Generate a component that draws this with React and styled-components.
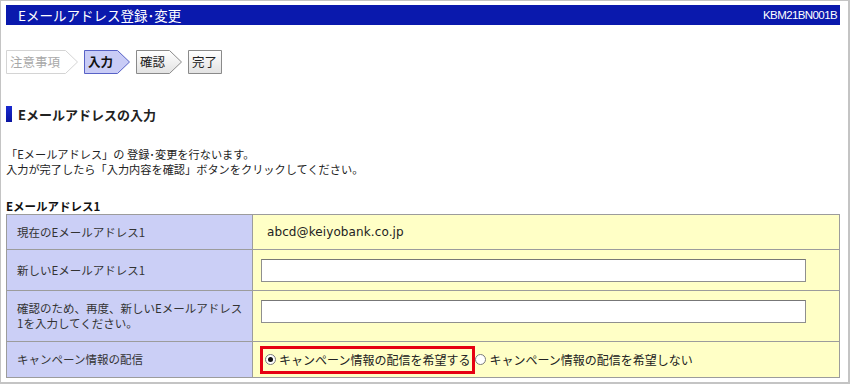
import React from 'react';
import styled, { createGlobalStyle } from 'styled-components';

const GlobalStyle = createGlobalStyle`
  html, body {
    margin: 0;
    padding: 0;
    background: #ffffff;
  }
  body {
    font-family: 'Noto Sans CJK JP', 'Noto Sans', sans-serif;
    color: #222;
  }
`;

const steps = [
  { label: '注意事項', width: 72, kind: 'done' },
  { label: '入力', width: 46, kind: 'current' },
  { label: '確認', width: 46, kind: 'next' },
  { label: '完了', width: 34, kind: 'last' },
];

const stepColors = {
  done: { stroke: '#d4d4d4', fill: '#ffffff', text: '#a8a8a8' },
  current: { stroke: '#5862c6', fill: '#c9ccf6', text: '#111' },
  next: { stroke: '#8a8a8a', fill: 'url(#stepGrad)', text: '#222' },
  last: { stroke: '#8a8a8a', fill: 'url(#stepGrad)', text: '#222' },
};

const StepShape = ({ width, kind }) => {
  const c = stepColors[kind];
  const h = 24;
  const points =
    kind === 'last'
      ? `0.5,0.5 ${width - 0.5},0.5 ${width - 0.5},${h - 0.5} 0.5,${h - 0.5}`
      : `0.5,0.5 ${width - 12.5},0.5 ${width - 0.5},${h / 2} ${width - 12.5},${h - 0.5} 0.5,${h - 0.5}`;
  return (
    <ShapeSvg width={width} height={h}>
      <defs>
        <linearGradient id="stepGrad" x1="0" y1="0" x2="0" y2="1">
          <stop offset="0" stopColor="#ffffff" />
          <stop offset="1" stopColor="#e2e2e2" />
        </linearGradient>
      </defs>
      <polygon points={points} fill={c.fill} stroke={c.stroke} strokeWidth="1" />
    </ShapeSvg>
  );
};

const App = () => {
  return (
    <>
      <GlobalStyle />
      <Frame>
        <TitleBar>
          <TitleText>Eメールアドレス登録･変更</TitleText>
          <ScreenId>KBM21BN001B</ScreenId>
        </TitleBar>

        <Stepper>
          {steps.map((s) => (
            <Step key={s.label} $w={s.width}>
              <StepShape width={s.width} kind={s.kind} />
              <StepLabel $color={stepColors[s.kind].text} $bold={s.kind === 'current'}>
                {s.label}
              </StepLabel>
            </Step>
          ))}
        </Stepper>

        <SectionHeading>Eメールアドレスの入力</SectionHeading>

        <Lead>
          「Eメールアドレス」の 登録･変更を行ないます。
          <br />
          入力が完了したら「入力内容を確認」ボタンをクリックしてください。
        </Lead>

        <TableCaption>Eメールアドレス1</TableCaption>
        <FormTable>
          <LabelCell $h={35}>現在のEメールアドレス1</LabelCell>
          <ValueCell $h={35}>
            <CurrentValue>abcd@keiyobank.co.jp</CurrentValue>
          </ValueCell>

          <LabelCell $h={41}>新しいEメールアドレス1</LabelCell>
          <ValueCell $h={41}>
            <TextInput type="text" />
          </ValueCell>

          <LabelCell $h={51}>
            確認のため、再度、新しいEメールアドレス
            <br />
            1を入力してください。
          </LabelCell>
          <ValueCell $h={51} $top>
            <TextInput type="text" />
          </ValueCell>

          <LabelCell $h={35} $last>キャンペーン情報の配信</LabelCell>
          <ValueCell $h={35} $last>
            <Highlight>
              <RadioOption>
                <Radio type="radio" name="campaign" defaultChecked />
                キャンペーン情報の配信を希望する
              </RadioOption>
            </Highlight>
            <RadioOption>
              <Radio type="radio" name="campaign" />
              キャンペーン情報の配信を希望しない
            </RadioOption>
          </ValueCell>
        </FormTable>
      </Frame>
    </>
  );
};

const Frame = styled.div`
  width: 850px;
  height: 384px;
  box-sizing: border-box;
  border: 1px solid #c4c4c4;
  border-right-width: 2px;
  border-bottom-width: 2px;
  padding: 4px 8px 0 5px;
  overflow: hidden;
`;

const TitleBar = styled.div`
  display: flex;
  align-items: center;
  justify-content: space-between;
  height: 20px;
  background: #0a19ad;
  color: #ffffff;
  padding: 0 3px 0 12px;
`;

const TitleText = styled.span`
  font-size: 13.5px;
  line-height: 20px;
`;

const ScreenId = styled.span`
  font-family: 'Liberation Sans', Arial, sans-serif;
  font-size: 11.5px;
  letter-spacing: -0.6px;
  line-height: 20px;
`;

const Stepper = styled.div`
  display: flex;
  gap: 6px;
  margin-top: 25px;
  height: 24px;
`;

const Step = styled.div`
  position: relative;
  width: ${(p) => p.$w}px;
  height: 24px;
  display: flex;
  align-items: center;
`;

const ShapeSvg = styled.svg`
  position: absolute;
  left: 0;
  top: 0;
`;

const StepLabel = styled.span`
  position: relative;
  padding-left: 4px;
  font-size: 12.5px;
  color: ${(p) => p.$color};
  font-weight: ${(p) => (p.$bold ? 700 : 400)};
  line-height: 24px;
`;

const SectionHeading = styled.h2`
  display: flex;
  align-items: center;
  gap: 6px;
  margin: 32px 0 0;
  height: 16px;
  font-size: 13px;
  font-weight: 700;
  color: #222;

  &::before {
    content: '';
    width: 6px;
    height: 16px;
    background: linear-gradient(#1a2ad0, #0a14a0);
  }
`;

const Lead = styled.p`
  margin: 25px 0 0;
  font-size: 11.2px;
  line-height: 15px;
  color: #222;
`;

const TableCaption = styled.div`
  margin-top: 22px;
  font-size: 11.5px;
  font-weight: 700;
  line-height: 14px;
  color: #111;
`;

const FormTable = styled.div`
  display: grid;
  grid-template-columns: 246px 1fr;
  width: 834px;
  margin-top: 1px;
  border: 1px solid #9c9c9c;
  box-sizing: border-box;
`;

const LabelCell = styled.div`
  display: flex;
  flex-direction: column;
  justify-content: center;
  height: ${(p) => p.$h}px;
  box-sizing: border-box;
  padding: 0 8px 0 10px;
  background: #cbcff6;
  border-right: 1px solid #9c9c9c;
  border-bottom: ${(p) => (p.$last ? 'none' : '1px solid #9c9c9c')};
  font-size: 11.5px;
  line-height: 15px;
  color: #333;
`;

const ValueCell = styled.div`
  display: flex;
  align-items: ${(p) => (p.$top ? 'flex-start' : 'center')};
  height: ${(p) => p.$h}px;
  box-sizing: border-box;
  padding: ${(p) => (p.$top ? '9px 8px 0 8px' : '0 8px 0 8px')};
  background: #ffffc6;
  border-bottom: ${(p) => (p.$last ? 'none' : '1px solid #9c9c9c')};
`;

const CurrentValue = styled.span`
  padding-left: 6px;
  font-family: 'DejaVu Sans', Verdana, sans-serif;
  font-size: 12px;
  letter-spacing: 0.1px;
  color: #222;
`;

const TextInput = styled.input`
  width: 545px;
  height: 23px;
  box-sizing: border-box;
  margin: 0;
  border: 1px solid #8f8f8f;
  border-top-color: #777;
  background: #ffffff;
  outline: none;
`;

const Highlight = styled.div`
  display: flex;
  align-items: center;
  height: 28px;
  box-sizing: border-box;
  padding: 0 2px 0 2px;
  margin-left: -1px;
  border: 3px solid #e60012;
`;

const RadioOption = styled.label`
  display: inline-flex;
  align-items: center;
  gap: 3px;
  font-size: 12px;
  color: #222;
  white-space: nowrap;
`;

const Radio = styled.input`
  appearance: none;
  width: 11px;
  height: 11px;
  margin: 0;
  border: 1px solid #7a7a7a;
  border-radius: 50%;
  background: #fff;
  display: grid;
  place-items: center;

  &:checked::after {
    content: '';
    width: 5px;
    height: 5px;
    border-radius: 50%;
    background: #111;
  }
`;

export default App;
